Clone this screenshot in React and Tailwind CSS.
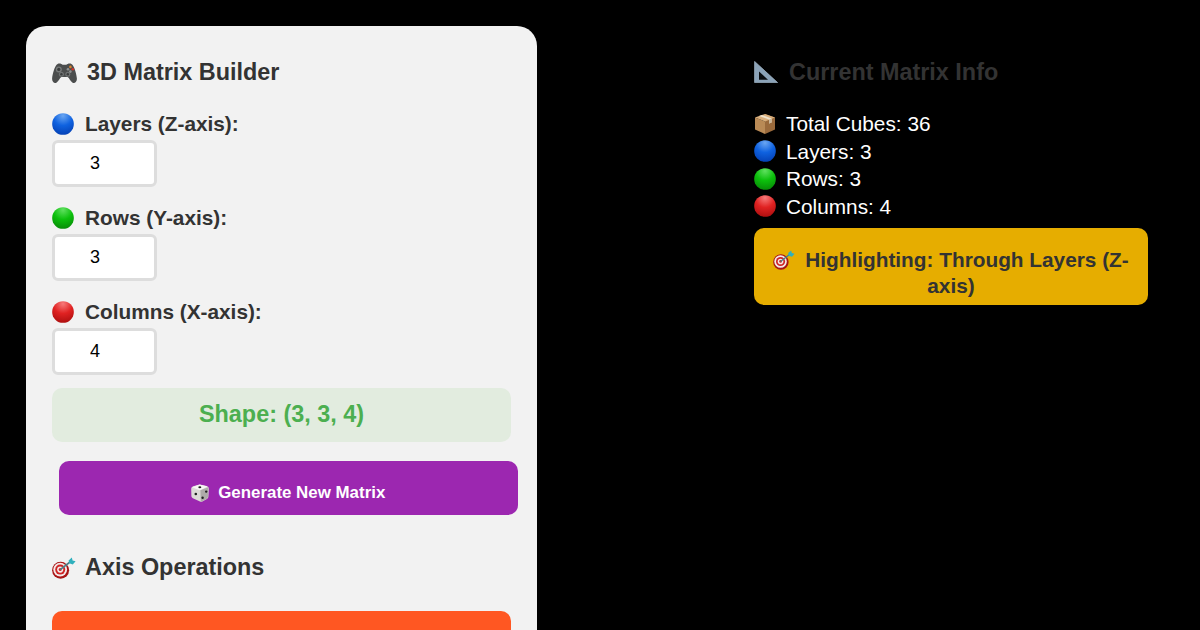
import { useId } from "react";

const Ball = ({ light, mid, dark, className = "h-[22px] w-[22px]" }) => {
  const id = useId();
  return (
    <svg viewBox="0 0 24 24" className={`shrink-0 ${className}`}>
      <defs>
        <radialGradient id={id} cx="50%" cy="12%" r="90%">
          <stop offset="0%" stopColor={light} />
          <stop offset="50%" stopColor={mid} />
          <stop offset="100%" stopColor={dark} />
        </radialGradient>
      </defs>
      <circle cx="12" cy="12" r="11.8" fill={`url(#${id})`} />
    </svg>
  );
};

const BlueBall = (props) => <Ball light="#6aa6f2" mid="#0f62e0" dark="#0440b4" {...props} />;
const GreenBall = (props) => <Ball light="#5fe05f" mid="#0cc00c" dark="#078a07" {...props} />;
const RedBall = (props) => <Ball light="#f77a7a" mid="#e02222" dark="#ad0f0f" {...props} />;

const Gamepad = () => (
  <svg viewBox="0 0 25 21" className="h-[21px] w-[25px] shrink-0">
    <path
      d="M5.6.9C7.4 0 9.6.7 10.6 1.8h3.8c1-1.1 3.2-1.8 5-.9 2.8 1.5 5.2 10 5.5 14.8.2 3-2.2 5.2-4.3 4-2.4-1.4-3.2-4.6-5-5.6h-6.2c-1.8 1-2.6 4.2-5 5.6-2.1 1.2-4.5-1-4.3-4C.4 10.9 2.8 2.4 5.6.9z"
      fill="#4b4d4d"
    />
    <circle cx="6.8" cy="6.4" r="3" fill="#777a7a" />
    <circle cx="6.8" cy="6.4" r="1.6" fill="#3a3c3c" />
    <circle cx="9.4" cy="11.2" r="2.5" fill="#6f7272" />
    <circle cx="9.4" cy="11.2" r="1.2" fill="#3a3c3c" />
    <circle cx="15.8" cy="11.2" r="2.5" fill="#6f7272" />
    <circle cx="15.8" cy="11.2" r="1.2" fill="#3a3c3c" />
    <circle cx="18.4" cy="3.9" r="1.3" fill="#d9812c" />
    <circle cx="20.8" cy="6.3" r="1.3" fill="#c9352c" />
    <circle cx="16" cy="6.3" r="1.3" fill="#8f9292" />
    <circle cx="18.4" cy="8.6" r="1.3" fill="#8f9292" />
  </svg>
);

const Target = ({ className }) => (
  <svg viewBox="0 0 24 22" className={`shrink-0 ${className}`}>
    <circle cx="8.6" cy="13.2" r="8.5" fill="#a81515" />
    <circle cx="8.2" cy="12.6" r="6.9" fill="#f4e9e9" />
    <circle cx="8.2" cy="12.6" r="5" fill="#d02424" />
    <circle cx="8.2" cy="12.6" r="3.1" fill="#f4e9e9" />
    <circle cx="8.2" cy="12.6" r="1.5" fill="#d02424" />
    <path d="M8.2 12.6 18 5" stroke="#4a7f88" strokeWidth="1.6" />
    <path d="M16.6 3.4 19.8.6l.8 2.8 3 .8-2.8 3.2-3.6-1.2z" fill="#2fb0bd" />
  </svg>
);

const Die = () => (
  <svg viewBox="0 0 18 18" className="h-[18px] w-[18px] shrink-0">
    <path d="M8.6.4 15.6 2c1.4.4 2.2 1.4 2.2 2.8l-.4 7.6c0 1.2-.6 2-1.6 2.6l-4.4 2.4c-.8.4-1.6.4-2.4 0l-6.6-3C1 13.8.4 13 .4 12L.2 5C.2 3.6 1 2.6 2.2 2.2z" fill="#dcdad7" />
    <path d="M1 3.2 8.6.6l8 2-7 3.4c-.6.2-1 .2-1.6 0z" fill="#f7f6f4" />
    <path d="M9.4 6.2 17.2 3.2 17 13l-1.4 2-5.8 2.8z" fill="#aeaca9" />
    <ellipse cx="8.8" cy="3.2" rx="1.5" ry="1" fill="#1f1f1f" />
    <circle cx="4.8" cy="10" r="1.3" fill="#1f1f1f" />
    <circle cx="11.6" cy="13.8" r="1.2" fill="#1f1f1f" />
    <circle cx="15.2" cy="7.6" r="1.2" fill="#1f1f1f" />
  </svg>
);

const SetSquare = () => (
  <svg viewBox="0 0 24 22" className="-mt-[2px] h-[22px] w-[24px] shrink-0">
    <path d="M.6.4 23.6 21.6H.6z" fill="#8ba3b8" />
    <path d="M.6.4 23.6 21.6H.6z" fill="none" stroke="#a9bdce" strokeWidth="0.7" />
    <path d="M5 10.4 14 18.8H5z" fill="#0a0d10" />
  </svg>
);

const Box = () => (
  <svg viewBox="0 0 22 22" className="h-[22px] w-[22px] shrink-0">
    <path d="M11 1 21 4.6v12L11 21z" fill="#9a6a3c" />
    <path d="M11 21 1 16.6v-12L11 8.4z" fill="#b98a56" />
    <path d="M1 4.6 11 1l10 3.6-10 3.8z" fill="#d8ae7c" />
    <path d="M5 3 15 6.6v4l2.6-1V5.6L7.8 2z" fill="#efe2cd" />
    <path d="M15 6.6 17.6 5.6v4l-2.6 1z" fill="#cbb79a" />
  </svg>
);

const NumberField = ({ value }) => (
  <input
    type="text"
    readOnly
    defaultValue={value}
    className="block h-[46.5px] w-[105px] rounded-[6px] border-[3px] border-[#dddddd] bg-white pl-[35px] text-[18px] text-black outline-none"
  />
);

const AxisField = ({ icon, label, value }) => (
  <div>
    <div className="flex h-[32px] items-center gap-[11px] text-[20.8px] font-bold leading-none text-[#333333]">
      {icon}
      <span>{label}</span>
    </div>
    <NumberField value={value} />
  </div>
);

const InfoRow = ({ icon, children }) => (
  <div className="flex h-[27.5px] items-center gap-[10px] text-[20.8px] text-white">
    {icon}
    <span>{children}</span>
  </div>
);

const App = () => {
  return (
    <div className="flex h-[630px] w-[1200px] items-start overflow-hidden bg-black pl-[26px] pt-[26px] font-['Liberation_Sans',Arial,sans-serif]">
      <div className="h-[640px] w-[511px] shrink-0 rounded-[20px] bg-[#f2f2f2] px-[26px] pt-[31px]">
        <h2 className="mb-[21px] flex h-[30px] items-center gap-[10px] pt-[2px] text-[23.4px] font-bold leading-none text-[#333333]">
          <Gamepad />
          <span>3D Matrix Builder</span>
        </h2>
        <div className="mb-[13.5px] flex flex-col gap-[15.5px]">
          <AxisField icon={<BlueBall />} label="Layers (Z-axis):" value="3" />
          <AxisField icon={<GreenBall />} label="Rows (Y-axis):" value="3" />
          <AxisField icon={<RedBall />} label="Columns (X-axis):" value="4" />
        </div>
        <div className="flex h-[54px] items-center justify-center rounded-[10px] bg-[#e2ecdf] text-[23.4px] font-bold text-[#4caf50]">
          Shape: (3, 3, 4)
        </div>
        <button className="ml-[7px] mt-[19px] flex h-[54px] w-[458.5px] items-center justify-center gap-[9px] rounded-[10px] bg-[#9c27b0] pt-[9px] text-[16.9px] font-bold text-white">
          <Die />
          <span>Generate New Matrix</span>
        </button>
        <h3 className="mt-[37px] flex h-[30px] items-center gap-[9px] pt-[2px] text-[23.4px] font-bold leading-none text-[#333333]">
          <Target className="h-[22px] w-[24px]" />
          <span>Axis Operations</span>
        </h3>
        <div className="mt-[29px] h-[60px] rounded-[10px] bg-[#ff5722]" />
      </div>

      <div className="ml-[217px] w-[394px] shrink-0 pt-[31px]">
        <h2 className="mb-[23px] flex h-[30px] items-center gap-[11px] pt-[2px] text-[23.4px] font-bold leading-none text-[#333333]">
          <SetSquare />
          <span>Current Matrix Info</span>
        </h2>
        <InfoRow icon={<Box />}>Total Cubes: 36</InfoRow>
        <InfoRow icon={<BlueBall />}>Layers: 3</InfoRow>
        <InfoRow icon={<GreenBall />}>Rows: 3</InfoRow>
        <InfoRow icon={<RedBall />}>Columns: 4</InfoRow>
        <div className="mt-[8px] rounded-[10px] bg-[#e6ad00] px-[13px] pb-[6px] pt-[19px] text-center text-[20.8px] font-bold leading-[26px] text-[#333333]">
          <Target className="mr-[10px] inline-block h-[20px] w-[22px] align-[-3px]" />
          Highlighting: Through Layers (Z-axis)
        </div>
      </div>
    </div>
  );
};

export default App;
